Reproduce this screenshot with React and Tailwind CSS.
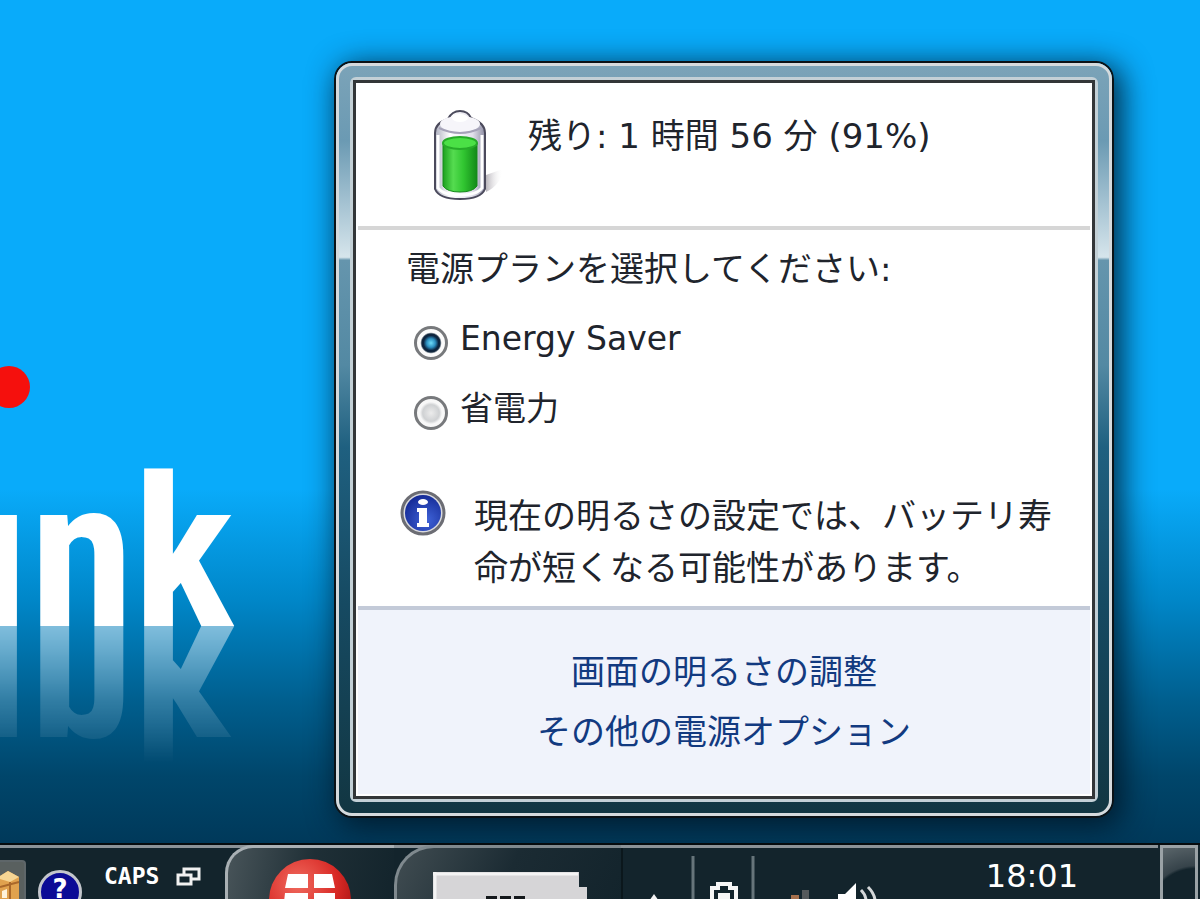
import { useState } from 'react';

const plans = [
  { id: 'energy-saver', name: 'Energy Saver' },
  { id: 'power-saver', name: '省電力' },
];

const Wallpaper = () => (
  <div className="absolute left-0 bottom-[217px] flex justify-end w-[234px]">
    <span className="font-['Roboto_Condensed','Liberation_Sans_Narrow',sans-serif] font-bold text-[210px] leading-[144px] text-white [-webkit-box-reflect:below_0px_linear-gradient(transparent_5%,rgba(255,255,255,0.2)_50%,rgba(255,255,255,0.5))]">
      ınk
    </span>
    <span className="absolute -left-3 bottom-[218px] size-[42px] rounded-full bg-[#f5100d]" />
  </div>
);

const BatteryIcon = () => (
  <svg className="w-[72px] h-[96px] shrink-0" viewBox="0 0 72 96" aria-hidden="true">
    <defs>
      <linearGradient id="shell" x1="0" x2="1">
        <stop offset="0" stopColor="#aeb0c0" />
        <stop offset="0.3" stopColor="#fff" />
        <stop offset="0.75" stopColor="#e2e0ec" />
        <stop offset="1" stopColor="#8f8fa5" />
      </linearGradient>
      <linearGradient id="charge" x1="0" x2="1">
        <stop offset="0" stopColor="#1da01f" />
        <stop offset="0.3" stopColor="#55dc50" />
        <stop offset="0.6" stopColor="#31c631" />
        <stop offset="1" stopColor="#138a18" />
      </linearGradient>
      <linearGradient id="cast" x1="0" x2="1">
        <stop offset="0" stopColor="#8b8590" />
        <stop offset="1" stopColor="#fff" stopOpacity="0" />
      </linearGradient>
    </defs>
    <path d="M54 66 L71 60 Q69 76 54 83 Z" fill="url(#cast)" opacity="0.6" />
    <path
      d="M3 24 Q3 14 16 10 Q20 2 28 2 Q36 2 39 9 Q53 14 53 24 V80 Q49 90 28 90 Q7 90 3 80 Z"
      fill="url(#shell)"
      stroke="#4b4a5c"
      strokeWidth="2"
    />
    <path d="M6 26 V79 Q11 86 28 86 Q45 86 50 79 V26" fill="none" stroke="#fff" strokeWidth="3" />
    <ellipse cx="28" cy="15" rx="20" ry="8" fill="#f6f5fa" />
    <path d="M7 19 Q28 29 49 19" fill="none" stroke="#a5a2b8" strokeWidth="2" />
    <ellipse cx="28" cy="9" rx="8" ry="4" fill="#fff" />
    <path d="M11 34 V77 Q15 83 28 83 Q41 83 45 77 V34 Z" fill="url(#charge)" stroke="#178b1c" strokeWidth="1" />
    <ellipse cx="28" cy="34" rx="17" ry="6" fill="#4be046" stroke="#27ab29" strokeWidth="2" />
  </svg>
);

const InfoIcon = () => (
  <svg className="w-[46px] h-[46px] shrink-0" viewBox="0 0 46 46" aria-hidden="true">
    <defs>
      <radialGradient id="info" cx="0.6" cy="0.7" r="0.8">
        <stop offset="0" stopColor="#3f63d8" />
        <stop offset="1" stopColor="#10248f" />
      </radialGradient>
    </defs>
    <circle cx="23" cy="23" r="21" fill="#d9dade" stroke="#6c6d74" strokeWidth="3" />
    <circle cx="23" cy="23" r="18" fill="url(#info)" />
    <ellipse cx="23" cy="12" rx="5" ry="3" fill="#fff" />
    <path d="M17 18 H27 V33 H29 V37 H17 V33 H19 V22 H17 Z" fill="#fff" />
  </svg>
);

const PowerPopup = () => {
  const [plan, setPlan] = useState('energy-saver');

  return (
    <section
      aria-label="電源"
      className="relative w-[65%] mr-[86px] mb-[25px] rounded-[18px] border-2 border-[#0b1216] shadow-[6px_6px_30px_2px_rgba(0,20,35,0.85)]"
    >
      <div className="rounded-2xl border-[3px] border-[#d5dadd] p-[11px] bg-[linear-gradient(180deg,#7ba3b8_0%,#6b9ab3_10%,#d6e5ec_25.6%,#6595ad_26%,#5389a3_40%,#1f6080_51%,#164a62_72%,#123642_100%)]">
        <div className="rounded-md border-[3px] border-[#c3d0d6]">
          <div className="border-[3px] border-[#333638] bg-white p-0.5 text-[34px] text-[#20242c]">
            <header className="flex gap-6 h-[145px] pl-[74px] pt-6 border-b-4 border-[#d6d6d6]">
              <BatteryIcon />
              <h1 className="leading-[54px]">残り: 1 時間 56 分 (91%)</h1>
            </header>

            <fieldset className="pl-12 pt-3">
              <legend className="contents">
                <span className="block leading-[54px]">電源プランを選択してください:</span>
              </legend>
              <div className="flex flex-col pt-2 pl-2 text-[33px]">
                {plans.map((p) => (
                  <label key={p.id} className="flex items-center gap-3 h-[70px]">
                    <input
                      type="radio"
                      name="plan"
                      value={p.id}
                      checked={plan === p.id}
                      onChange={() => setPlan(p.id)}
                      className="appearance-none size-[34px] mt-2 rounded-full border-[3px] border-[#77797c] bg-[radial-gradient(circle,#ececec_0%,#cfd1d3_42%,#f8f8f8_56%)] checked:bg-[radial-gradient(circle,#6fdcf8_0%,#2c8fc0_22%,#0c2440_38%,#10263c_46%,#fbfbfb_54%)]"
                    />
                    {p.name}
                  </label>
                ))}
              </div>
            </fieldset>

            <div className="flex gap-7 pl-[42px] pr-8 pt-[46px] pb-3 leading-[52px]">
              <InfoIcon />
              <p>現在の明るさの設定では、バッテリ寿命が短くなる可能性があります。</p>
            </div>

            <footer className="flex flex-col items-center h-[188px] pt-8 leading-[60px] border-t-4 border-[#c3cad8] bg-[#f0f3fb] text-[#123a80]">
              <a href="#brightness">画面の明るさの調整</a>
              <a href="#options">その他の電源オプション</a>
            </footer>
          </div>
        </div>
      </div>
    </section>
  );
};

const Taskbar = () => (
  <footer className="relative flex h-14 shrink-0 overflow-hidden border-t-2 border-[#050b0e] bg-[#13242c] text-white">
    <div className="flex flex-1 border-t-[3px] border-[#8b9398]">
      <div className="w-[26px] mt-3 rounded-tr border-t-2 border-r-2 border-[#5e6669] bg-[#59605f] overflow-hidden">
        <svg className="w-6 h-10" viewBox="0 0 24 40" aria-hidden="true">
          <path d="M0 14 L8 9 L19 15 V40 H0 Z" fill="#e0a24e" />
          <path d="M0 14 L8 9 L19 15 L10 20 L0 17 Z" fill="#f6d594" />
          <path d="M10 20 V40 M0 25 L19 20" stroke="#a9682a" strokeWidth="2" />
          <path d="M2 29 L7 27 V36 H2 Z" fill="#fff3da" />
        </svg>
      </div>
      <button
        aria-label="ヘルプ"
        className="flex justify-center ml-3 mt-[22px] size-11 shrink-0 rounded-full border-[3px] border-[#c3c6cc] bg-[#0b0b96] font-bold text-[26px] leading-8"
      >
        ?
      </button>
      <span className="ml-[22px] pt-3 text-[23px] leading-8 font-bold font-['DejaVu_Sans_Mono',monospace]">CAPS</span>
      <svg className="ml-4 mt-4 w-7 h-7" viewBox="0 0 28 28" fill="#13242c" stroke="#f1f1f1" strokeWidth="3" aria-hidden="true">
        <rect x="9" y="5" width="15" height="10" />
        <rect x="3" y="11" width="13" height="9" />
      </svg>

      <button
        aria-label="Windows"
        className="ml-[22px] -mt-[3px] w-[169px] rounded-tl-[28px] border-t-[3px] border-l-[3px] border-[#a9b0b4] bg-[linear-gradient(100deg,#485459_0%,#1f2f36_50%,#13242c_100%)]"
      >
        <svg className="ml-10 mt-1.5 w-[84px] h-12" viewBox="0 0 84 48" aria-hidden="true">
          <defs>
            <radialGradient id="orb" cx="0.35" cy="0.3" r="0.8">
              <stop offset="0" stopColor="#f06a5e" />
              <stop offset="0.6" stopColor="#d92a26" />
              <stop offset="1" stopColor="#a01010" />
            </radialGradient>
          </defs>
          <circle cx="42" cy="46" r="41" fill="url(#orb)" />
          <path d="M20 20 H40 V34 H17 Z M46 20 H64 L67 34 H46 Z M17 39 H40 V48 H16 Z M46 39 H67 V48 H46 Z" fill="#fff" />
        </svg>
      </button>
      <button
        aria-label="バッテリ"
        className="-mt-[3px] w-[227px] rounded-tl-[40px] border-t-[3px] border-l-[3px] border-[#7f898e] bg-[linear-gradient(115deg,#414d52_0%,#1b2b33_50%,#13242c_100%)]"
      >
        <svg className="ml-9 mt-6 w-40 h-8" viewBox="0 0 160 32" aria-hidden="true">
          <path d="M0 0 H146 V15 H154 V32 H0 Z" fill="#d6d5d7" />
          <path d="M0 2 H145 M2 0 V32" stroke="#f4f4f4" strokeWidth="3" />
          <path d="M53 27 H92" stroke="#14181b" strokeWidth="6" strokeDasharray="11 3" />
        </svg>
      </button>

      <div className="flex flex-1 border-l-2 border-[#0b171c]">
        <svg className="w-[260px] h-14 shrink-0" viewBox="0 0 260 56" aria-hidden="true">
          <path d="M70 8 V56 M130 8 V56" stroke="#66747a" strokeWidth="3" />
          <path d="M24 56 L31 46 L38 56 Z" fill="#f4f4f4" />
          <path d="M89 56 V40 H95 V36 H107 V40 H113 V56" fill="none" stroke="#f6f6f6" strokeWidth="4" />
          <rect x="95" y="45" width="12" height="11" fill="#f6f6f6" />
          <rect x="168" y="47" width="8" height="9" fill="#a56f4c" />
          <rect x="179" y="42" width="7" height="14" fill="#55595b" />
          <path d="M215 56 V46 H222 L233 35 V56 Z" fill="#fff" />
          <path d="M238 42 Q244 48 243 56 M245 39 Q253 47 252 56" fill="none" stroke="#d5d8da" strokeWidth="3" />
        </svg>
        <time className="ml-auto mr-20 pt-2.5 text-[32px] leading-9">18:01</time>
      </div>
    </div>
    <button
      aria-label="デスクトップの表示"
      className="ml-0.5 mr-0.5 w-[38px] border-[3px] border-b-0 border-[#9aa2a6] bg-[radial-gradient(circle_at_100%_130%,#13242c_62%,#36434a_66%,#5b666b_100%)]"
    />
  </footer>
);

const App = () => {
  return (
    <div className="flex flex-col min-h-screen overflow-hidden font-['DejaVu_Sans','Noto_Sans_CJK_JP',sans-serif] bg-[#09abfa]">
      <main className="relative flex flex-1 items-end justify-end bg-[linear-gradient(180deg,#09abfa_0%,#09abfa_58%,#0087c9_71%,#005f8f_83%,#00466b_92%,#00395a_100%)]">
        <Wallpaper />
        <PowerPopup />
      </main>
      <Taskbar />
    </div>
  );
};

export default App;
